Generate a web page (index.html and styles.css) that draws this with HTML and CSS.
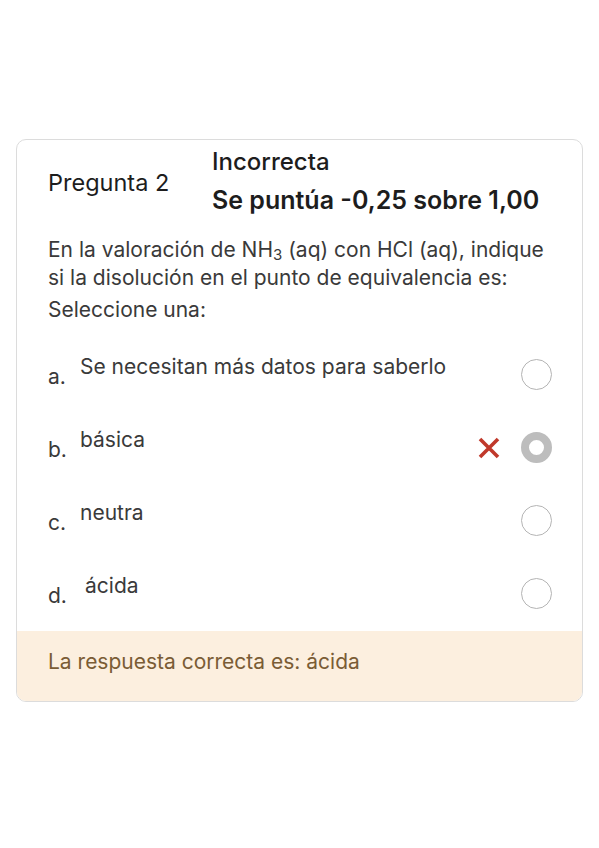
FILE: index.html
```html
<!DOCTYPE html>
<html lang="es">
<head>
    <meta charset="UTF-8">
    <meta name="viewport" content="width=device-width, initial-scale=1.0">
    <title>Pregunta 2</title>
    <link rel="stylesheet" href="styles.css">
</head>
<body>
    <div class="question">
        <div class="question-head">
            <div class="qno">Pregunta 2</div>
            <div class="state">
                <div class="state-label">Incorrecta</div>
                <div class="grade">Se puntúa -0,25 sobre 1,00</div>
            </div>
        </div>

        <div class="qtext">
            En la valoración de NH<sub>3</sub> (aq) con HCl (aq), indique si la disolución en el punto de equivalencia es:
        </div>
        <div class="prompt">Seleccione una:</div>

        <div class="answers">
            <div class="answer">
                <span class="letter">a.</span>
                <span class="answer-text">Se necesitan más datos para saberlo</span>
                <span class="radio"></span>
            </div>
            <div class="answer">
                <span class="letter">b.</span>
                <span class="answer-text">básica</span>
                <svg class="wrong" width="22" height="22" viewBox="0 0 22 22">
                    <path d="M2 2 L20 20 M20 2 L2 20" stroke="#c0392b" stroke-width="3.6"/>
                </svg>
                <span class="radio checked"></span>
            </div>
            <div class="answer">
                <span class="letter">c.</span>
                <span class="answer-text">neutra</span>
                <span class="radio"></span>
            </div>
            <div class="answer">
                <span class="letter">d.</span>
                <span class="answer-text shift">ácida</span>
                <span class="radio"></span>
            </div>
        </div>

        <div class="feedback">La respuesta correcta es: ácida</div>
    </div>
</body>
</html>
```

FILE: styles.css
```css
body {
    margin: 0;
    background-color: #fff;
    font-family: Inter, Roboto, "Noto Sans", sans-serif;
    color: #333;
}

.question {
    margin: 139px 16px 0 16px;
    border: 1px solid #dcdcdc;
    border-radius: 10px;
    overflow: hidden;
}

.question-head {
    display: flex;
    align-items: center;
    padding: 6px 0 0 31px;
}

.qno {
    width: 164px;
    font-size: 23.5px;
    color: #1d1d1d;
    padding-top: 2px;
}

.state-label {
    font-size: 24px;
    font-weight: 500;
    color: #1d1d1d;
    line-height: 32px;
}

.grade {
    font-size: 25px;
    font-weight: 600;
    color: #1d1d1d;
    line-height: 32px;
    margin-top: 6px;
}

.qtext {
    padding: 20px 28px 0 31px;
    font-size: 21px;
    line-height: 28px;
    color: #3a3a3a;
}

.qtext sub {
    font-size: 15px;
    vertical-align: -3px;
    line-height: 0;
}

.prompt {
    padding: 4px 31px 0 31px;
    font-size: 21px;
    line-height: 28px;
    color: #3a3a3a;
}

.answers {
    padding: 14px 31px 1px 31px;
}

.answer {
    display: flex;
    align-items: center;
    height: 73px;
    font-size: 21px;
    color: #3a3a3a;
}

.letter {
    width: 32px;
    padding-top: 4px;
}

.answer-text {
    flex: 1;
    margin-top: -16px;
}

.answer-text.shift {
    padding-left: 5px;
}

.wrong {
    margin-right: 21px;
}

.radio {
    width: 31px;
    height: 31px;
    border: 1.5px solid #b4b4b4;
    border-radius: 50%;
    box-sizing: border-box;
    margin-right: -1px;
}

.radio.checked {
    border: 8px solid #bdbdbd;
}

.feedback {
    background-color: #fcefdf;
    padding: 17px 31px 25px 31px;
    font-size: 21px;
    line-height: 28px;
    color: #7a5c35;
}
```
